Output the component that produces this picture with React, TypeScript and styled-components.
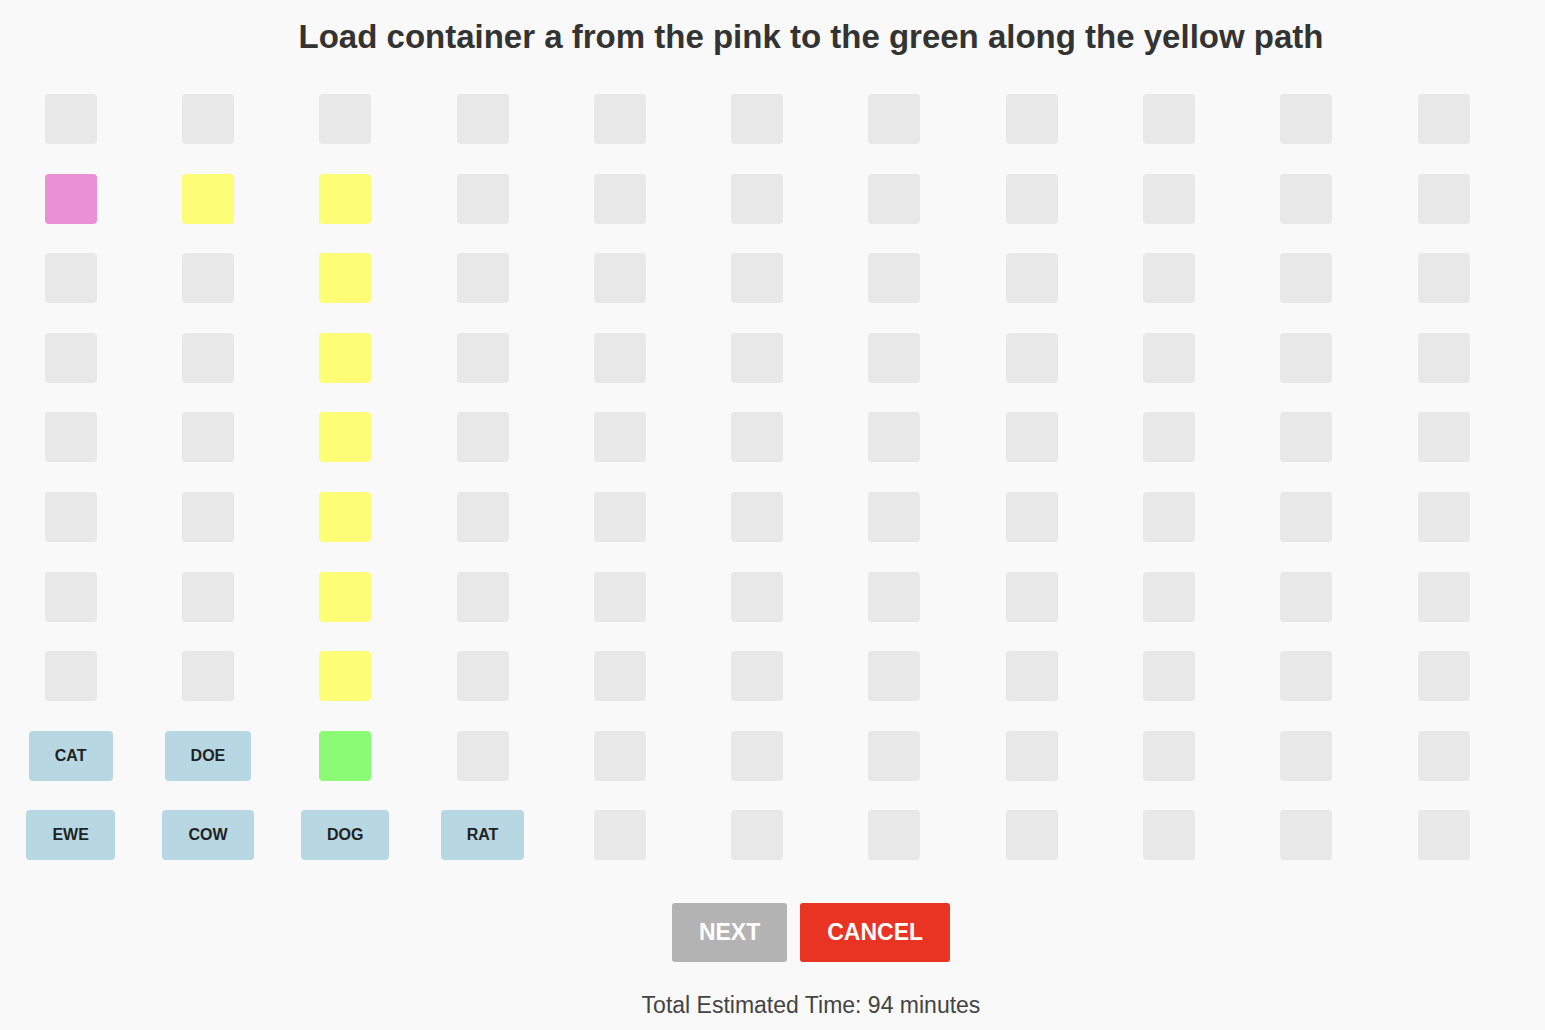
import styled, { createGlobalStyle } from "styled-components";

const GlobalStyle = createGlobalStyle`
  body {
    margin: 0;
    background: #f9f9f9;
    font-family: "Liberation Sans", Arial, sans-serif;
  }
`;

type Kind = "empty" | "pink" | "yellow" | "green" | "label";

interface Slot {
  kind: Kind;
  text?: string;
}

const ROWS = 10;
const COLS = 11;

const buildGrid = (): Slot[][] => {
  const grid: Slot[][] = [];
  for (let r = 0; r < ROWS; r++) {
    const row: Slot[] = [];
    for (let c = 0; c < COLS; c++) row.push({ kind: "empty" });
    grid.push(row);
  }
  grid[1][0] = { kind: "pink" };
  grid[1][1] = { kind: "yellow" };
  for (let r = 1; r <= 7; r++) grid[r][2] = { kind: "yellow" };
  grid[8][0] = { kind: "label", text: "CAT" };
  grid[8][1] = { kind: "label", text: "DOE" };
  grid[8][2] = { kind: "green" };
  grid[9][0] = { kind: "label", text: "EWE" };
  grid[9][1] = { kind: "label", text: "COW" };
  grid[9][2] = { kind: "label", text: "DOG" };
  grid[9][3] = { kind: "label", text: "RAT" };
  return grid;
};

const colours: Record<Kind, string> = {
  empty: "#e8e8e8",
  pink: "#ea90d4",
  yellow: "#fdfd78",
  green: "#8bfb75",
  label: "#b7d8e3",
};

export default function App() {
  const grid = buildGrid();
  return (
    <>
      <GlobalStyle />
      <Page>
        <Title>Load container a from the pink to the green along the yellow path</Title>
        <Board>
          {grid.map((row, r) =>
            row.map((slot, c) =>
              slot.kind === "label" ? (
                <Label key={`${r}-${c}`}>{slot.text}</Label>
              ) : (
                <Cell key={`${r}-${c}`} $kind={slot.kind} />
              )
            )
          )}
        </Board>
        <Actions>
          <Button $variant="next">NEXT</Button>
          <Button $variant="cancel">CANCEL</Button>
        </Actions>
        <Footer>Total Estimated Time: 94 minutes</Footer>
      </Page>
    </>
  );
}

const Page = styled.div`
  display: flex;
  flex-direction: column;
  min-height: 1030px;
`;

const Title = styled.h1`
  margin: 17px 0 0;
  padding-left: 77px;
  text-align: center;
  font-size: 33px;
  line-height: 40px;
  font-weight: bold;
  color: #333333;
`;

const Board = styled.div`
  display: grid;
  grid-template-columns: repeat(11, 137.3px);
  grid-auto-rows: 50px;
  row-gap: 29.6px;
  margin: 37px 0 0 2px;
`;

const Cell = styled.div<{ $kind: Kind }>`
  justify-self: center;
  width: 52px;
  height: 50px;
  border-radius: 4px;
  background: ${(p) => colours[p.$kind]};
`;

const Label = styled.div`
  justify-self: center;
  display: flex;
  align-items: center;
  justify-content: center;
  height: 50px;
  padding: 0 26px;
  border-radius: 4px;
  background: ${colours.label};
  color: #222;
  font-size: 16px;
  font-weight: 600;
`;

const Actions = styled.div`
  display: flex;
  justify-content: center;
  gap: 13px;
  margin-top: 43px;
  padding-left: 77px;
`;

const Button = styled.button<{ $variant: "next" | "cancel" }>`
  height: 59px;
  padding: 0 27px;
  border: none;
  border-radius: 3px;
  background: ${(p) => (p.$variant === "next" ? "#b3b3b3" : "#e93323")};
  color: #ffffff;
  font-family: "Liberation Sans", Arial, sans-serif;
  font-size: 23px;
  font-weight: bold;
`;

const Footer = styled.p`
  margin: 31px 0 0;
  padding-left: 77px;
  text-align: center;
  font-size: 23px;
  line-height: 24px;
  color: #444444;
`;
